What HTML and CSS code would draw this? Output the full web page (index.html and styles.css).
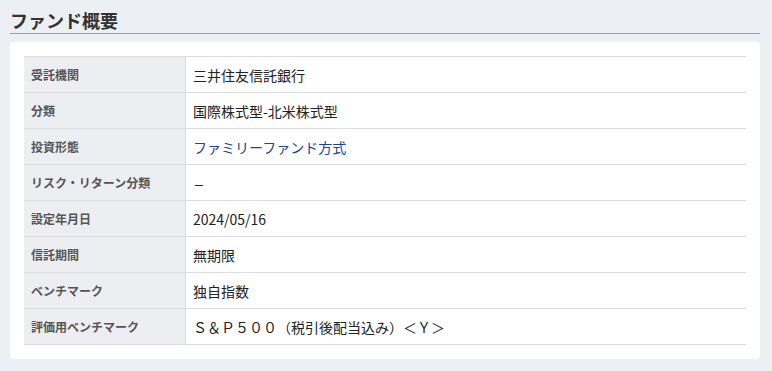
FILE: index.html
```html
<!DOCTYPE html>
<html lang="ja">
<head>
    <meta charset="UTF-8">
    <meta name="viewport" content="width=device-width, initial-scale=1.0">
    <title>ファンド概要</title>
    <link rel="stylesheet" href="styles.css">
</head>
<body>
    <section class="fund-summary">
        <h2 class="section-title">ファンド概要</h2>
        <div class="card">
            <table class="summary-table">
                <tbody>
                    <tr>
                        <th>受託機関</th>
                        <td>三井住友信託銀行</td>
                    </tr>
                    <tr>
                        <th>分類</th>
                        <td>国際株式型-北米株式型</td>
                    </tr>
                    <tr>
                        <th>投資形態</th>
                        <td><a href="#">ファミリーファンド方式</a></td>
                    </tr>
                    <tr>
                        <th>リスク・リターン分類</th>
                        <td><span class="dash">&ndash;</span></td>
                    </tr>
                    <tr>
                        <th>設定年月日</th>
                        <td>2024/05/16</td>
                    </tr>
                    <tr>
                        <th>信託期間</th>
                        <td>無期限</td>
                    </tr>
                    <tr>
                        <th>ベンチマーク</th>
                        <td>独自指数</td>
                    </tr>
                    <tr>
                        <th>評価用ベンチマーク</th>
                        <td>Ｓ＆Ｐ５００（税引後配当込み）＜Ｙ＞</td>
                    </tr>
                </tbody>
            </table>
        </div>
    </section>
</body>
</html>
```

FILE: styles.css
```css
body {
    font-family: "Noto Sans CJK JP", "Noto Sans", sans-serif;
    background-color: #eceff3;
    margin: 0;
    padding: 0;
    color: #222;
}
.fund-summary {
    width: 750px;
    padding: 0 10px;
}
.section-title {
    margin: 0;
    padding-top: 7px;
    height: 26px;
    font-size: 18px;
    line-height: 26px;
    font-weight: bold;
    color: #333;
    border-bottom: 1px solid #9a9ea4;
}
.card {
    background-color: white;
    margin-top: 8px;
    padding: 14px;
    border-radius: 4px;
}
.summary-table {
    width: 100%;
    border-collapse: collapse;
}
.summary-table th,
.summary-table td {
    height: 35px;
    padding: 0 7px;
    border-top: 1px solid #dcdcdc;
    border-bottom: 1px solid #dcdcdc;
    text-align: left;
    vertical-align: middle;
}
.summary-table th {
    width: 146px;
    padding-right: 8px;
    background-color: #eceef2;
    border-right: 1px solid #dcdcdc;
    font-size: 12px;
    font-weight: bold;
    color: #555;
}
.summary-table td {
    font-size: 14px;
    color: #222;
}
.summary-table a {
    color: #1a449a;
    text-decoration: none;
}
.dash {
    display: inline-block;
    padding-left: 2px;
    font-family: "Liberation Sans", sans-serif;
}
```
